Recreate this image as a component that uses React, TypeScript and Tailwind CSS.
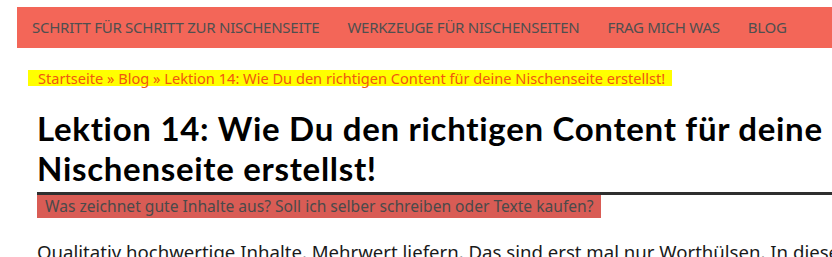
export default function App() {
  return (
    <div className="w-[832px] h-[257px] overflow-hidden bg-white">
      <div className="w-[1000px] pl-[17px] pt-[7px]">
        <nav
          className="h-[41px] bg-[#f36658] flex items-center pl-[15px] gap-[28px] text-[15px] tracking-[-0.25px] text-[#4f4f4f] uppercase whitespace-nowrap"
          style={{ fontFamily: '"Noto Sans", sans-serif' }}
        >
          <span>Schritt für Schritt zur Nischenseite</span>
          <span>Werkzeuge für Nischenseiten</span>
          <span>Frag mich was</span>
          <span>Blog</span>
        </nav>
        <div className="pl-[20px] pr-[30px]">
          <div className="mt-[22px] flex">
            <div
              className="bg-[#ffff00] text-[#f0560f] text-[14.6px] leading-[16px] h-[16px] pl-[10px] pr-[7px] -ml-[9px] whitespace-nowrap"
              style={{ fontFamily: '"Noto Sans", sans-serif' }}
            >
              Startseite » Blog » Lektion 14: Wie Du den richtigen Content für deine Nischenseite erstellst!
            </div>
          </div>
          <h1
            className="mt-[22px] text-[33px] leading-[40px] tracking-[0.7px] font-bold text-black whitespace-nowrap"
            style={{ fontFamily: 'Lato, sans-serif' }}
          >
            Lektion 14: Wie Du den richtigen Content für deine
            <br />
            Nischenseite erstellst!
          </h1>
          <div className="mt-[4px] h-[3px] bg-[#2f2f2f]" />
          <div className="flex">
            <div
              className="bg-[#d95c55] text-[#4a4a4a] text-[15.6px] leading-[23px] h-[23px] pl-[8px] pr-[7px] whitespace-nowrap"
              style={{ fontFamily: '"Noto Sans", sans-serif' }}
            >
              Was zeichnet gute Inhalte aus? Soll ich selber schreiben oder Texte kaufen?
            </div>
          </div>
          <p
            className="mt-[20px] text-[18.6px] leading-[28px] text-[#1a1a1a] whitespace-nowrap"
            style={{ fontFamily: '"Noto Sans", sans-serif' }}
          >
            Qualitativ hochwertige Inhalte. Mehrwert liefern. Das sind erst mal nur Worthülsen. In diesem Artikel
          </p>
        </div>
      </div>
    </div>
  );
}
